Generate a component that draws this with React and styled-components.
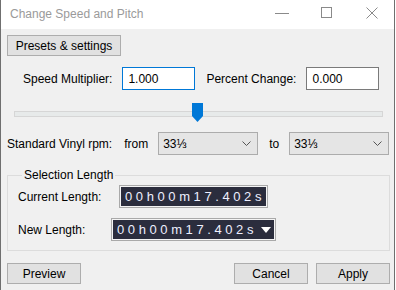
import React from 'react';
import styled, { createGlobalStyle } from 'styled-components';

const GlobalStyle = createGlobalStyle`
  html, body {
    margin: 0;
    padding: 0;
    background: #ffffff;
  }
  body {
    font-family: "Liberation Sans", Arial, sans-serif;
    font-size: 12px;
    color: #000;
  }
`;

const timeText = '00h00m17.402s';

const App = () => {
  return (
    <>
      <GlobalStyle />
      <Window>
        <TitleBar>
          <Title>Change Speed and Pitch</Title>
          <Caption>
            <CaptionButton>
              <svg width="14" height="10" viewBox="0 0 14 10">
                <line x1="0" y1="5.5" x2="14" y2="5.5" stroke="#8a8a8a" strokeWidth="1" />
              </svg>
            </CaptionButton>
            <CaptionButton>
              <svg width="11" height="11" viewBox="0 0 11 11">
                <rect x="0.5" y="0.5" width="10" height="10" fill="none" stroke="#8a8a8a" strokeWidth="1" />
              </svg>
            </CaptionButton>
            <CaptionButton>
              <svg width="12" height="12" viewBox="0 0 12 12">
                <path d="M0.5 0.5 L11.5 11.5 M11.5 0.5 L0.5 11.5" stroke="#8a8a8a" strokeWidth="1" />
              </svg>
            </CaptionButton>
          </Caption>
        </TitleBar>

        <Body>
          <div>
            <Button $width={114}>Presets &amp; settings</Button>
          </div>

          <FieldRow>
            <Label>Speed Multiplier:</Label>
            <TextBox $focused defaultValue="1.000" />
            <Label $left={11}>Percent Change:</Label>
            <TextBox defaultValue="0.000" />
          </FieldRow>

          <Slider>
            <Track />
            <Thumb width="11" height="19" viewBox="0 0 11 19">
              <polygon points="0,0 11,0 11,13 5.5,19 0,13" fill="#0078d7" />
            </Thumb>
          </Slider>

          <VinylRow>
            <Label>Standard Vinyl rpm:</Label>
            <Label $left={12}>from</Label>
            <Select $left={10}>
              <span>33⅓</span>
              <Chevron width="9" height="5" viewBox="0 0 9 5">
                <polyline points="0.5,0.5 4.5,4.5 8.5,0.5" fill="none" stroke="#555" strokeWidth="1" />
              </Chevron>
            </Select>
            <Label $left={11}>to</Label>
            <Select $left={10}>
              <span>33⅓</span>
              <Chevron width="9" height="5" viewBox="0 0 9 5">
                <polyline points="0.5,0.5 4.5,4.5 8.5,0.5" fill="none" stroke="#555" strokeWidth="1" />
              </Chevron>
            </Select>
          </VinylRow>

          <Group>
            <Legend>Selection Length</Legend>
            <LengthRow>
              <LengthLabel $width={101}>Current Length:</LengthLabel>
              <TimeBox $width={149}>
                <TimeText>{timeText}</TimeText>
              </TimeBox>
            </LengthRow>
            <LengthRow $top={10}>
              <LengthLabel $width={93}>New Length:</LengthLabel>
              <TimeBox $width={165}>
                <TimeText>{timeText}</TimeText>
                <DropArrow width="10" height="6" viewBox="0 0 10 6">
                  <polygon points="0,0 10,0 5,6" fill="#ffffff" />
                </DropArrow>
              </TimeBox>
            </LengthRow>
          </Group>

          <Footer>
            <Button $width={74}>Preview</Button>
            <Spacer />
            <Button $width={74}>Cancel</Button>
            <Button $width={74}>Apply</Button>
          </Footer>
        </Body>
      </Window>
    </>
  );
};

export default App;

const Window = styled.div`
  width: 395px;
  height: 290px;
  box-sizing: border-box;
  border-left: 1px solid #6f6f6f;
  border-right: 1px solid #6f6f6f;
  display: flex;
  flex-direction: column;
  overflow: hidden;
`;

const TitleBar = styled.div`
  height: 29px;
  flex-shrink: 0;
  background: #ffffff;
  display: flex;
  align-items: center;
  padding-left: 9px;
`;

const Title = styled.div`
  flex: 1;
  color: #9a9a9a;
  font-size: 12px;
  margin-top: -1px;
`;

const Caption = styled.div`
  display: flex;
  height: 100%;
`;

const CaptionButton = styled.div`
  width: 45px;
  height: 100%;
  display: flex;
  align-items: center;
  justify-content: center;
  margin-top: -2px;
`;

const Body = styled.div`
  flex: 1;
  background: #f0f0f0;
  padding: 6px 4px 0 6px;
`;

const Button = styled.div`
  width: ${p => p.$width}px;
  height: 21px;
  box-sizing: border-box;
  background: #e1e1e1;
  border: 1px solid #adadad;
  display: flex;
  align-items: center;
  justify-content: center;
  color: #000;
`;

const FieldRow = styled.div`
  display: flex;
  align-items: center;
  margin-top: 11px;
  padding-left: 16px;
`;

const Label = styled.span`
  margin-left: ${p => p.$left || 0}px;
  white-space: nowrap;
`;

const TextBox = styled.input`
  width: 73px;
  height: 23px;
  box-sizing: border-box;
  margin-left: 10px;
  border: 1px solid ${p => (p.$focused ? '#0078d7' : '#7a7a7a')};
  background: #fff;
  font-family: "Liberation Sans", Arial, sans-serif;
  font-size: 12px;
  padding: 0 5px;
  outline: none;
  color: #000;
`;

const Slider = styled.div`
  position: relative;
  height: 19px;
  margin: 13px 7px 0 7px;
  display: flex;
  align-items: center;
`;

const Track = styled.div`
  flex: 1;
  height: 4px;
  background: #e7eaea;
  border: 1px solid #d6d6d6;
  margin-top: 3px;
`;

const Thumb = styled.svg`
  position: absolute;
  left: 178px;
  top: 0;
`;

const VinylRow = styled.div`
  display: flex;
  align-items: center;
  margin-top: 10px;
`;

const Select = styled.div`
  margin-left: ${p => p.$left || 0}px;
  width: 100px;
  height: 23px;
  box-sizing: border-box;
  background: #e5e5e5;
  border: 1px solid #acacac;
  display: flex;
  align-items: center;
  justify-content: space-between;
  padding: 0 6px 0 4px;
`;

const Chevron = styled.svg`
  display: block;
`;

const Group = styled.fieldset`
  margin: 13px 0 0 0;
  padding: 3px 0 9px 10px;
  width: 383px;
  box-sizing: border-box;
  border: 1px solid #dcdcdc;
  min-width: 0;
`;

const Legend = styled.legend`
  padding: 0 2px;
  margin-left: 4px;
  line-height: 14px;
`;

const LengthRow = styled.div`
  display: flex;
  align-items: center;
  margin-top: ${p => p.$top || 0}px;
`;

const LengthLabel = styled.span`
  width: ${p => p.$width}px;
  flex-shrink: 0;
`;

const TimeBox = styled.div`
  position: relative;
  width: ${p => p.$width}px;
  height: 23px;
  box-sizing: border-box;
  border: 1px solid #a9a9a9;
  padding: 1px;
  background: #f4f4f4;
  display: flex;
`;

const TimeText = styled.div`
  flex: 1;
  display: flex;
  align-items: center;
  padding-left: 4px;
  background: #2b2d3d;
  color: #eef0ff;
  font-size: 13px;
  letter-spacing: 3.6px;
`;

const DropArrow = styled.svg`
  position: absolute;
  right: 4px;
  top: 8px;
`;

const Footer = styled.div`
  display: flex;
  align-items: center;
  gap: 8px;
  margin-top: 12px;
  width: 383px;
`;

const Spacer = styled.div`
  flex: 1;
`;
